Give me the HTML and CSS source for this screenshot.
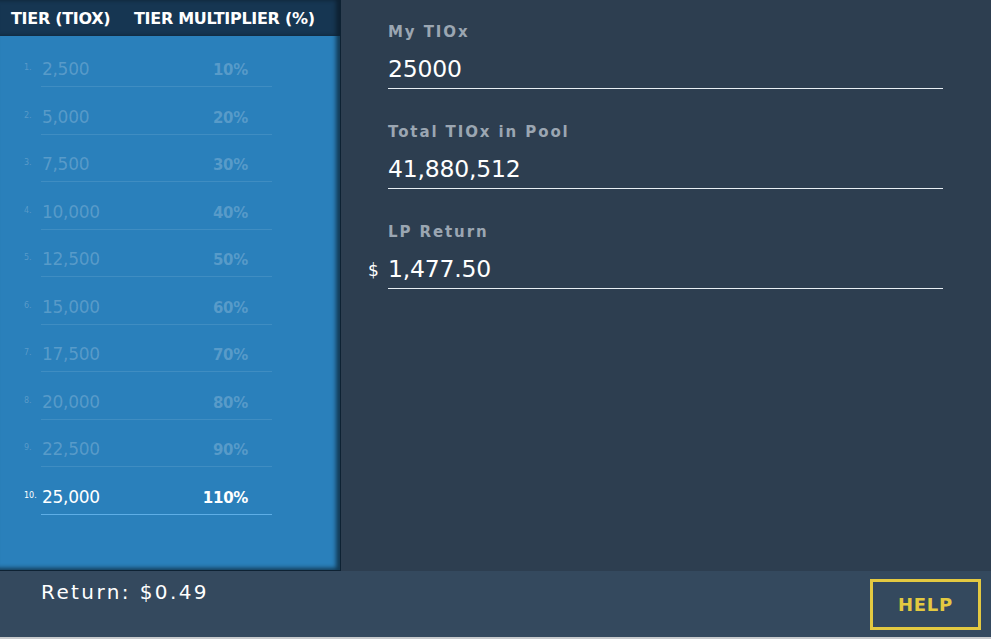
FILE: index.html
```html
<!DOCTYPE html>
<html>
    <head>
        <meta charset="UTF-8">
        <title>LP Return Calculator</title>
        <link rel="stylesheet" href="styles.css">
    </head>
    <body>
        <div class="app">
            <div class="tiers">
                <div class="tiers_head">
                    <span class="col_tier">TIER (TIOX)</span>
                    <span class="col_mult">TIER MULTIPLIER (%)</span>
                </div>
                <ol class="tier_list">
                    <li><span class="num">1.</span><div class="line"><span>2,500</span><b>10%</b></div></li>
                    <li><span class="num">2.</span><div class="line"><span>5,000</span><b>20%</b></div></li>
                    <li><span class="num">3.</span><div class="line"><span>7,500</span><b>30%</b></div></li>
                    <li><span class="num">4.</span><div class="line"><span>10,000</span><b>40%</b></div></li>
                    <li><span class="num">5.</span><div class="line"><span>12,500</span><b>50%</b></div></li>
                    <li><span class="num">6.</span><div class="line"><span>15,000</span><b>60%</b></div></li>
                    <li><span class="num">7.</span><div class="line"><span>17,500</span><b>70%</b></div></li>
                    <li><span class="num">8.</span><div class="line"><span>20,000</span><b>80%</b></div></li>
                    <li><span class="num">9.</span><div class="line"><span>22,500</span><b>90%</b></div></li>
                    <li class="active"><span class="num">10.</span><div class="line"><span>25,000</span><b>110%</b></div></li>
                </ol>
            </div>

            <div class="form">
                <div class="field">
                    <label>My TIOx</label>
                    <div class="input">25000</div>
                </div>
                <div class="field">
                    <label>Total TIOx in Pool</label>
                    <div class="input">41,880,512</div>
                </div>
                <div class="field">
                    <label>LP Return</label>
                    <div class="input"><span class="cur">$</span>1,477.50</div>
                </div>
            </div>

            <div class="footer">
                <div class="return">Return: $0.49</div>
                <button class="help">HELP</button>
            </div>
        </div>
    </body>
</html>
```

FILE: styles.css
```css
html, body {
    margin: 0;
    padding: 0;
}
body {
    background: #2d3e50;
    font-family: 'DejaVu Sans', 'Noto Sans', sans-serif;
    color: #fff;
}
.app {
    display: grid;
    grid-template-columns: 341px 1fr;
    grid-template-rows: 571px 66px;
    height: 637px;
    border-bottom: 2px solid #c9cbcd;
}
.tiers {
    background: #2a80bb;
    box-shadow: inset -4px -2px 4px rgba(0, 0, 0, 0.55);
    border-right: 1px solid #0e2233;
    border-bottom: 1px solid #0e2233;
}
.tiers_head {
    display: flex;
    height: 36px;
    align-items: center;
    background: #163652;
    font-family: 'DejaVu Sans', sans-serif;
    font-weight: bold;
    font-size: 16px;
    letter-spacing: -0.3px;
    box-shadow: inset -4px 0 4px rgba(0, 0, 0, 0.4);
}
.col_tier {
    margin-left: 11px;
    width: 123px;
}
.tier_list {
    list-style: none;
    margin: 0;
    padding: 0 0 0 24px;
}
.tier_list li {
    display: flex;
    align-items: flex-end;
    height: 47.5px;
    color: rgba(255, 255, 255, 0.22);
}
.tier_list li:first-child {
    height: 51px;
}
.num {
    width: 17px;
    font-size: 8px;
    padding-bottom: 15px;
}
.line {
    display: flex;
    justify-content: space-between;
    align-items: baseline;
    width: 206px;
    padding: 0 24px 7px 1px;
    border-bottom: 1px solid rgba(255, 255, 255, 0.1);
}
.line span {
    font-size: 17px;
    letter-spacing: -0.3px;
}
.line b {
    font-size: 15px;
    letter-spacing: -0.3px;
}
.tier_list li.active {
    color: #fff;
}
.tier_list li.active .line {
    border-bottom-color: #5eaee6;
}
.form {
    padding: 23px 48px 0 47px;
}
.field {
    margin-bottom: 34px;
}
.field label {
    display: block;
    font-size: 15px;
    line-height: 18px;
    font-weight: bold;
    letter-spacing: 1.9px;
    color: #9ba6b2;
    margin-bottom: 14px;
}
.input {
    position: relative;
    font-size: 23.5px;
    line-height: 28px;
    height: 28px;
    letter-spacing: -0.2px;
    padding-bottom: 5px;
    border-bottom: 1px solid #e8eef3;
}
.cur {
    position: absolute;
    left: -20px;
    top: 1px;
    font-size: 17px;
}
.footer {
    grid-column: 1 / 3;
    display: flex;
    justify-content: space-between;
    align-items: flex-start;
    background: #34495e;
    padding: 8px 10px 0 41px;
}
.return {
    font-size: 20px;
    letter-spacing: 2.4px;
    margin-top: 1px;
}
.help {
    width: 111px;
    height: 51px;
    background: transparent;
    border: 3px solid #e3c941;
    color: #e3c941;
    font-family: 'DejaVu Sans', sans-serif;
    font-weight: bold;
    font-size: 18px;
    letter-spacing: 0.8px;
}
```
